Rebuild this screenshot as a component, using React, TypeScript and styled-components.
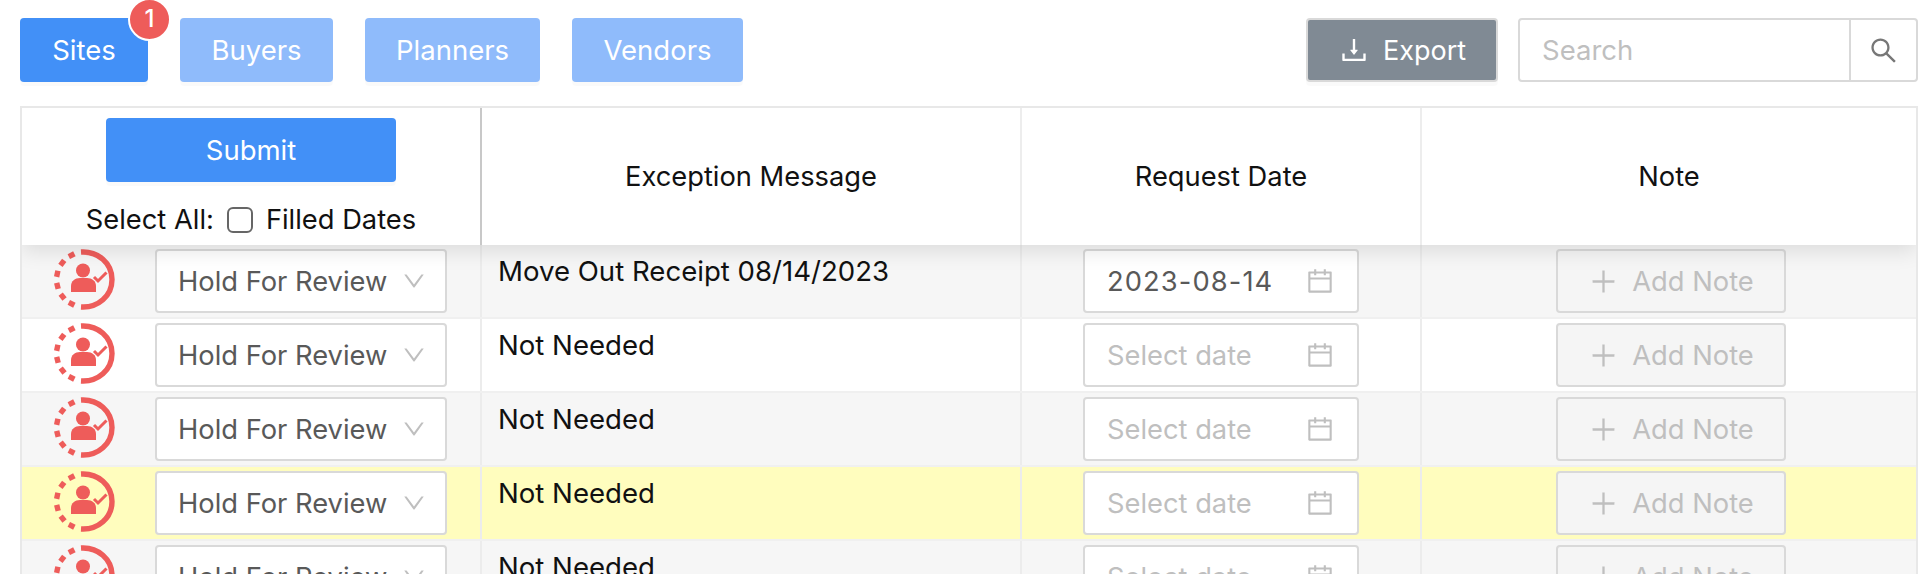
import React from 'react';
import styled, { createGlobalStyle } from 'styled-components';
import { AiOutlineCalendar, AiOutlineDown, AiOutlineDownload, AiOutlinePlus, AiOutlineSearch } from 'react-icons/ai';

const GlobalStyle = createGlobalStyle`
	html, body {
		margin: 0;
		padding: 0;
		background: #fff;
		overflow: hidden;
		font-family: Inter, "Liberation Sans", sans-serif;
	}
`;

const Page = styled.div`
	width: 1932px;
	height: 574px;
	overflow: hidden;
	padding: 18px 14px 0 20px;
	box-sizing: border-box;
`;

const Toolbar = styled.div`
	display: flex;
	align-items: flex-start;
	height: 88px;
`;

const Tabs = styled.div`
	display: flex;
	gap: 32px;
	flex: 1;
`;

const Tab = styled.button<{ $active?: boolean; $width: number }>`
	position: relative;
	width: ${({ $width }) => $width}px;
	height: 64px;
	padding: 0;
	border: none;
	border-radius: 4px;
	background: ${({ $active }) => ($active ? '#4290f7' : '#8fbbfb')};
	box-shadow: 0 4px 0 rgba(0, 0, 0, 0.02);
	color: #fff;
	font: 400 27.5px Inter, sans-serif;
`;

const Badge = styled.span`
	position: absolute;
	top: -20px;
	right: -23px;
	width: 39px;
	height: 39px;
	border: 2px solid #fff;
	border-radius: 50%;
	background: #ee5c5a;
	color: #fff;
	font: 500 24px/37px Inter, sans-serif;
	text-align: center;
`;

const ExportButton = styled.button`
	display: flex;
	align-items: center;
	justify-content: center;
	gap: 13px;
	width: 192px;
	height: 64px;
	margin-right: 20px;
	border: 2px solid #d9d9d9;
	border-radius: 4px;
	background: #808a94;
	box-shadow: 0 4px 0 rgba(0, 0, 0, 0.02);
	color: #fff;
	font: 400 27px Inter, sans-serif;
	svg {
		font-size: 32px;
	}
`;

const SearchBox = styled.div`
	display: flex;
	width: 400px;
	height: 64px;
	box-sizing: border-box;
	border: 2px solid #d9d9d9;
	border-radius: 4px;
`;

const SearchText = styled.div`
	flex: 1;
	padding-left: 22px;
	color: #bfbfbf;
	font-size: 27.5px;
	line-height: 60px;
`;

const SearchIcon = styled.div`
	display: flex;
	align-items: center;
	justify-content: center;
	width: 65px;
	border-left: 2px solid #d9d9d9;
	color: #777;
	font-size: 31px;
`;

const Table = styled.div`
	width: 1898px;
	border: 2px solid #e8e8e8;
	box-sizing: border-box;
`;

const HeaderRow = styled.div`
	position: relative;
	z-index: 1;
	display: grid;
	grid-template-columns: 460px 540px 400px 1fr;
	height: 137px;
	background: #fff;
	box-shadow: 0 6px 20px rgba(0, 0, 0, 0.11);
	clip-path: inset(0 0 -40px 0);
`;

const HeaderCell = styled.div`
	display: flex;
	align-items: center;
	justify-content: center;
	border-right: 2px solid #ededed;
	color: #111;
	font-size: 27.3px;
	&:last-child {
		border-right: none;
	}
`;

const FixedHeaderCell = styled.div`
	display: flex;
	flex-direction: column;
	align-items: center;
	padding-top: 10px;
	border-right: 2px solid #c8c8c8;
`;

const SubmitButton = styled.button`
	width: 290px;
	height: 64px;
	padding: 0;
	border: none;
	border-radius: 4px;
	background: #4290f7;
	box-shadow: 0 4px 0 rgba(0, 0, 0, 0.02);
	color: #fff;
	font: 400 27.5px Inter, sans-serif;
`;

const SelectAll = styled.div`
	display: flex;
	align-items: center;
	gap: 13px;
	margin-top: 20px;
	color: #111;
	font-size: 27.3px;
	line-height: 36px;
`;

const CheckBox = styled.span`
	width: 26px;
	height: 26px;
	box-sizing: border-box;
	border: 2px solid #666;
	border-radius: 6px;
	background: #fff;
`;

const Row = styled.div<{ $tone: 'grey' | 'white' | 'yellow' }>`
	display: grid;
	grid-template-columns: 460px 540px 400px 1fr;
	height: 74px;
	box-sizing: border-box;
	border-bottom: 2px solid #f0f0f0;
	background: ${({ $tone }) =>
		$tone === 'yellow' ? '#fffdbe' : $tone === 'grey' ? '#f6f6f6' : '#fff'};
`;

const Cell = styled.div`
	display: flex;
	justify-content: center;
	align-items: flex-start;
	padding-top: 4px;
	box-sizing: border-box;
	border-right: 2px solid #ececec;
	&:last-child {
		border-right: none;
		padding-left: 4px;
	}
`;

const StatusCell = styled(Cell)`
	justify-content: flex-start;
	gap: 40px;
	padding-left: 31px;
`;

const MessageCell = styled(Cell)`
	justify-content: flex-start;
	padding-left: 16px;
	padding-top: 6px;
	color: #111;
	font-size: 27.6px;
	line-height: 40px;
`;

const Control = styled.div`
	display: flex;
	align-items: center;
	height: 64px;
	box-sizing: border-box;
	border: 2px solid #d9d9d9;
	border-radius: 4px;
	background: #fff;
	font-size: 27.3px;
`;

const Select = styled(Control)`
	justify-content: space-between;
	width: 292px;
	padding: 0 18px 0 21px;
	color: #595959;
	svg {
		font-size: 26px;
		color: #bfbfbf;
	}
`;

const DateBox = styled(Control)<{ $empty: boolean }>`
	justify-content: space-between;
	width: 276px;
	padding: 0 22px;
	color: ${({ $empty }) => ($empty ? '#bfbfbf' : '#595959')};
	letter-spacing: ${({ $empty }) => ($empty ? '0' : '1.1px')};
	svg {
		font-size: 30px;
		color: #bfbfbf;
	}
`;

const NoteButton = styled(Control)`
	justify-content: center;
	gap: 13px;
	width: 230px;
	background: #f5f5f5;
	color: #bfbfbf;
	svg {
		font-size: 31px;
	}
`;

const IconSvg = styled.svg`
	flex-shrink: 0;
`;

const dashAngles = [27, 52.5, 78, 103.5, 128.5, 153];

const dashEnd = (deg: number) => ({
	x: 31 - 27.5 * Math.sin((deg * Math.PI) / 180),
	y: 30.5 - 27.5 * Math.cos((deg * Math.PI) / 180),
});

const StatusIcon = () => (
	<IconSvg width="62" height="62" viewBox="0 0 62 62" fill="none">
		<path d="M28 3 C45 2 59 14 59 30.5 C59 47 45 59 28 58" stroke="#ee5c5a" strokeWidth="5.4" />
		{dashAngles.map((a) => {
			const from = dashEnd(a - 6.5);
			const to = dashEnd(a + 6.5);
			return <line key={a} x1={from.x} y1={from.y} x2={to.x} y2={to.y} stroke="#ee5c5a" strokeWidth="5.4" />;
		})}
		<circle cx="30" cy="21.5" r="7" fill="#ee5c5a" />
		<path d="M18 43 V37 C18 32 22 29 27 29 H34 C39 29 43 32 43 37 V43 Z" fill="#ee5c5a" />
		<path d="M41 28 L45 32 L53.5 23.5" stroke="#ee5c5a" strokeWidth="3" />
	</IconSvg>
);

const rows = [
	{ tone: 'grey', message: 'Move Out Receipt 08/14/2023', date: '2023-08-14' },
	{ tone: 'white', message: 'Not Needed', date: '' },
	{ tone: 'grey', message: 'Not Needed', date: '' },
	{ tone: 'yellow', message: 'Not Needed', date: '' },
	{ tone: 'grey', message: 'Not Needed', date: '' },
] as const;

const App: React.FC = () => (
	<Page>
		<GlobalStyle />
		<Toolbar>
			<Tabs>
				<Tab $active $width={128}>
					Sites
					<Badge>1</Badge>
				</Tab>
				<Tab $width={153}>Buyers</Tab>
				<Tab $width={175}>Planners</Tab>
				<Tab $width={171}>Vendors</Tab>
			</Tabs>
			<ExportButton>
				<AiOutlineDownload />
				Export
			</ExportButton>
			<SearchBox>
				<SearchText>Search</SearchText>
				<SearchIcon>
					<AiOutlineSearch />
				</SearchIcon>
			</SearchBox>
		</Toolbar>
		<Table>
			<HeaderRow>
				<FixedHeaderCell>
					<SubmitButton>Submit</SubmitButton>
					<SelectAll>
						Select All:
						<CheckBox />
						Filled Dates
					</SelectAll>
				</FixedHeaderCell>
				<HeaderCell>Exception Message</HeaderCell>
				<HeaderCell>Request Date</HeaderCell>
				<HeaderCell>Note</HeaderCell>
			</HeaderRow>
			{rows.map((row, i) => (
				<Row key={i} $tone={row.tone}>
					<StatusCell>
						<StatusIcon />
						<Select>
							Hold For Review
							<AiOutlineDown />
						</Select>
					</StatusCell>
					<MessageCell>{row.message}</MessageCell>
					<Cell>
						<DateBox $empty={!row.date}>
							{row.date || 'Select date'}
							<AiOutlineCalendar />
						</DateBox>
					</Cell>
					<Cell>
						<NoteButton>
							<AiOutlinePlus />
							Add Note
						</NoteButton>
					</Cell>
				</Row>
			))}
		</Table>
	</Page>
);

export default App;
